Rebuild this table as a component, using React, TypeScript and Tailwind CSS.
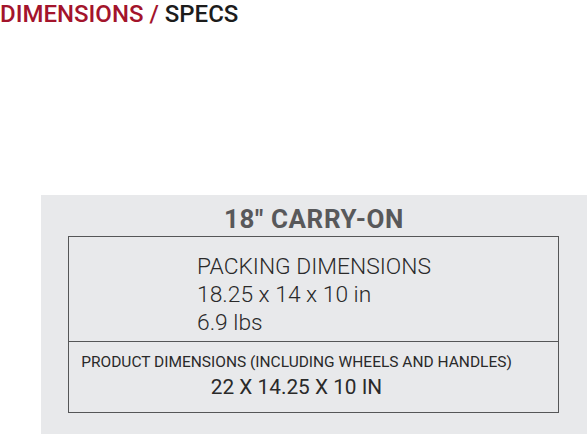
export default function App() {
  return (
    <div
      className="w-[588px] h-[441px] bg-white overflow-hidden"
      style={{ fontFamily: "Roboto, 'Liberation Sans', sans-serif" }}
    >
      <h2 className="text-[24px] leading-[28px] font-medium">
        <span className="text-[#a3142c]">DIMENSIONS / </span>
        <span className="text-[#1c1c1c]">SPECS</span>
      </h2>

      <div className="mt-[167px] ml-[41px] w-[546px] h-[239px] bg-[#e8e9eb] pt-[9px]">
        <div className="text-center text-[26px] leading-[30px] font-bold tracking-[0.6px] text-[#58585a]">
          18&quot; CARRY-ON
        </div>

        <div className="mt-[2px] ml-[27px] w-[491px] h-[177px] border border-[#555657]">
          <div className="h-[105px] border-b border-[#555657] pl-[128px] pt-[16px] text-[22.8px] leading-[28px] font-light text-[#2a2a2a]">
            <div>PACKING DIMENSIONS</div>
            <div>18.25 x 14 x 10 in</div>
            <div>6.9 lbs</div>
          </div>
          <div className="pr-[34px] pt-[9px] text-center text-[#2a2a2a]">
            <div className="text-[15.5px] leading-[22px]">
              PRODUCT DIMENSIONS (INCLUDING WHEELS AND HANDLES)
            </div>
            <div className="text-[20.8px] leading-[28px]">22 X 14.25 X 10 IN</div>
          </div>
        </div>
      </div>
    </div>
  );
}
